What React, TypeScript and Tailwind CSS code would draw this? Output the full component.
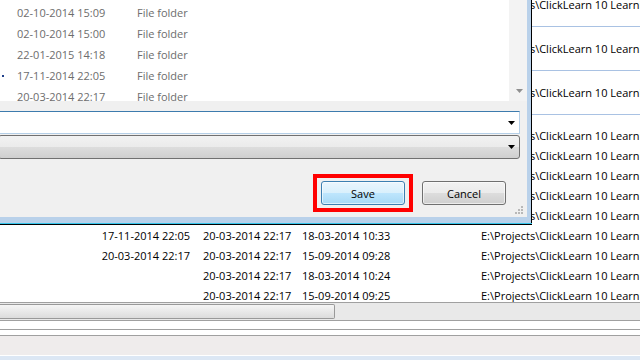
import React from "react";

const PATH = "E:\\Projects\\ClickLearn 10 Learning Portal";

const DIALOG_ROWS = [
  { date: "02-10-2014 15:09", type: "File folder" },
  { date: "02-10-2014 15:00", type: "File folder" },
  { date: "22-01-2015 14:18", type: "File folder" },
  { date: "17-11-2014 22:05", type: "File folder", dot: true },
  { date: "20-03-2014 22:17", type: "File folder" },
];

const ROWS = [
  ["02-10-2014 15:09", "20-03-2014 22:17", "18-03-2014 10:33"],
  ["02-10-2014 15:00", "20-03-2014 22:17", "15-09-2014 09:28"],
  ["22-01-2015 14:18", "20-03-2014 22:17", "18-03-2014 10:24"],
  ["", "20-03-2014 22:17", "15-09-2014 09:25"],
  ["", "20-03-2014 22:17", "18-03-2014 10:33"],
  ["17-11-2014 22:05", "20-03-2014 22:17", "18-03-2014 10:33"],
  ["20-03-2014 22:17", "20-03-2014 22:17", "15-09-2014 09:28"],
  ["", "20-03-2014 22:17", "18-03-2014 10:24"],
  ["", "20-03-2014 22:17", "15-09-2014 09:25"],
];

function Arrow({ color = "#000" }: { color?: string }) {
  return (
    <svg width="7" height="4" viewBox="0 0 7 4">
      <path d="M0 0h7L3.5 4z" fill={color} />
    </svg>
  );
}

function Grip() {
  const dots = [
    [6, 0],
    [3, 3],
    [6, 3],
    [0, 6],
    [3, 6],
    [6, 6],
  ];
  return (
    <svg width="8" height="8" viewBox="0 0 8 8">
      {dots.map(([x, y]) => (
        <rect key={`${x}-${y}`} x={x} y={y} width="2" height="2" fill="#b8b8b8" />
      ))}
    </svg>
  );
}

function SaveDialog() {
  return (
    <div className="absolute left-0 top-0 flex w-[532px] flex-col">
      <div className="flex">
        <div className="relative flex h-[217px] w-[527px] flex-col bg-[#f0f0f0]">
          {/* file list */}
          <div className="flex h-[101px]">
            <div className="h-full w-[509px] overflow-hidden bg-white pt-[2px] text-[#6d6d6d]">
              {DIALOG_ROWS.map((r) => (
                <div key={r.date + r.type + (r.dot ? "d" : "")} className="flex h-[21px] items-center">
                  <div className="flex w-[17px] shrink-0 items-center">
                    {r.dot && <span className="ml-[2px] h-[2px] w-[2px] bg-[#1f3f8a]" />}
                  </div>
                  <span className="w-[120px] shrink-0">{r.date}</span>
                  <span>{r.type}</span>
                </div>
              ))}
            </div>
            <div className="flex h-full w-[18px] flex-col items-center justify-end bg-[#f3f3f3] pb-[8px] pl-[2px]">
              <Arrow color="#8f8f8f" />
            </div>
          </div>
          <div className="h-[10px]" />

          {/* file name */}
          <div className="-ml-[2px] flex h-[23px] w-[522px] items-center justify-end border border-[#b5cfe7] border-t-[#3d7bad] bg-white pr-[4px]">
            <Arrow />
          </div>
          <div className="h-[1px]" />
          {/* save as type */}
          <div className="-ml-[2px] flex h-[24px] w-[522px] items-center justify-end rounded-[3px] border border-[#707070] bg-[linear-gradient(to_bottom,#f2f2f2_0%,#ebebeb_50%,#dddddd_50%,#cfcfcf_100%)] pr-[4px]">
            <Arrow />
          </div>

          {/* buttons */}
          <div className="flex flex-1 items-start justify-end pr-[21px] pt-[15px]">
            <div className="border-4 border-[#ff0000] px-[4px] py-[3px]">
              <button className="flex h-[24px] w-[84px] items-center justify-center rounded-[3px] border border-[#3c7fb1] bg-[linear-gradient(to_bottom,#eaf6fd_0%,#d9f0fc_50%,#bee6fd_50%,#a7d9f5_100%)] text-black shadow-[inset_0_0_0_1px_rgba(255,255,255,0.6)]">
                Save
              </button>
            </div>
            <button className="ml-[9px] mt-[7px] flex h-[24px] w-[84px] items-center justify-center rounded-[3px] border border-[#707070] bg-[linear-gradient(to_bottom,#f2f2f2_0%,#ebebeb_50%,#dddddd_50%,#cfcfcf_100%)] text-black shadow-[inset_0_0_0_1px_rgba(255,255,255,0.6)]">
              Cancel
            </button>
          </div>
          <div className="absolute bottom-[3px] right-[4px]">
            <Grip />
          </div>
        </div>
        <div className="w-[4px] bg-[#b9d1ea]" />
        <div className="w-[1px] bg-black" />
      </div>
      <div className="flex">
        <div className="h-[6px] w-[531px] bg-[#b9d1ea]" />
        <div className="w-[1px] bg-black" />
      </div>
      <div className="h-[1px] bg-[#36c6ec]" />
      <div className="h-[1px] bg-black" />
    </div>
  );
}

export default function App() {
  return (
    <div className="relative flex h-[360px] w-[640px] flex-col overflow-hidden bg-white font-['Open_Sans',sans-serif] text-[11px] leading-none text-black">
      {/* list view */}
      <div className="h-[302px] overflow-hidden">
        <div className="-mt-[17px]">
          {[0, 1, 2].map((i) => (
            <div key={i} className="flex h-[44px] items-center whitespace-nowrap border-b border-[#a9c2e3] pl-[481px]">
              {PATH}
            </div>
          ))}
        </div>
        <div className="h-[10px]" />
        {ROWS.map((r, i) => (
          <div key={i} className="flex h-[20px] items-center whitespace-nowrap">
            <span className="w-[190px] shrink-0 text-right">{r[0]}</span>
            <span className="ml-[13px] w-[99px] shrink-0">{r[1]}</span>
            <span className="w-[179px] shrink-0">{r[2]}</span>
            <span className="shrink-0">{PATH}</span>
          </div>
        ))}
      </div>

      {/* horizontal scrollbar */}
      <div className="flex h-[19px] items-center border-y border-[#a0a0a0] bg-[#e9e9e9]">
        <div className="h-[15px] w-[335px] rounded-r-[2px] border border-l-0 border-[#999] bg-[linear-gradient(to_bottom,#f5f5f5,#dcdcdc)]" />
      </div>
      <div className="h-[8px]" />
      <div className="h-[1px] bg-[#a0a0a0]" />
      <div className="h-[5px]" />
      <div className="h-[1px] bg-[#a0a0a0]" />
      <div className="h-[19px] bg-[#efecec]" />
      <div className="h-[1px]" />
      <div className="flex-1 bg-[#dce7f4]" />

      <SaveDialog />
    </div>
  );
}
